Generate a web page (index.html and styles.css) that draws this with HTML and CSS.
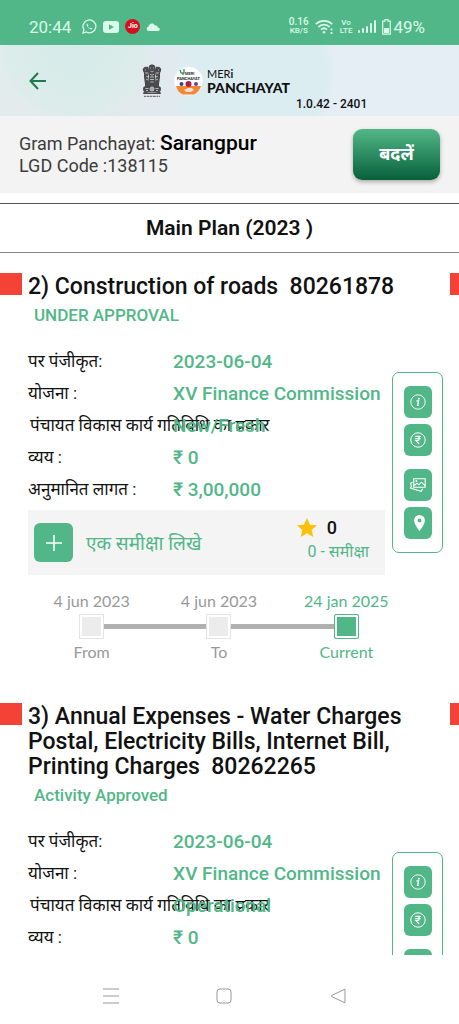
FILE: index.html
```html
<!DOCTYPE html>
<html lang="en">
  <head>
    <meta charset="UTF-8" />
    <meta name="viewport" content="width=device-width, initial-scale=1.0" />
    <title>Meri Panchayat</title>
    <link rel="stylesheet" href="styles.css">
  </head>
  <body>
    <!-- shared icons -->
    <svg class="sprite" aria-hidden="true">
      <symbol id="icon-info" viewBox="0 0 16 16">
        <circle cx="8" cy="8" r="7.2" fill="none" stroke="#fff" stroke-width="0.9" />
        <circle cx="8.8" cy="4.8" r="1" fill="#fff" />
        <path d="M6.6 7h2L7.6 11.3h1.2" fill="none" stroke="#fff" stroke-width="1.3" />
      </symbol>
      <symbol id="icon-rupee" viewBox="0 0 16 16">
        <circle cx="8" cy="8" r="7.2" fill="none" stroke="#fff" />
        <path d="M5.3 4.4h5.4M5.3 6.5h5.4M5.5 4.4h1.7c2.8 0 2.8 4 0 4H5.6l3.6 3.5" fill="none" stroke="#fff" stroke-width="1.1" />
      </symbol>
      <symbol id="icon-gallery" viewBox="0 0 16 16">
        <path d="M3.7 1.7h11.5v8.6H3.7zM4 8.6l3-2.5 2 1.7 2.4-2.6 3.6 3.4M2.6 5.2L.7 6.1l.8 4M1.4 9.2L.5 11l10.6 3.3 1.6-2.6" fill="none" stroke="#fff" stroke-width="1.1" />
        <circle cx="6.3" cy="4.1" r="1" fill="#fff" />
      </symbol>
      <symbol id="icon-pin" viewBox="0 0 16 16">
        <path d="M9.5 0a5.4 5.4 0 0 0-5.4 5.4C4.1 9.4 9.5 16 9.5 16s5.4-6.6 5.4-10.6A5.4 5.4 0 0 0 9.5 0zm0 3.5a1.9 1.9 0 1 1 0 3.8 1.9 1.9 0 0 1 0-3.8z" fill="#fff" />
      </symbol>
    </svg>

    <div class="app">
      <div class="status-bar">
        <span class="clock">20:44</span>
        <svg width="15" height="15" viewBox="0 0 15 15" fill="none" stroke="#d9fbe9" stroke-width="1.3">
          <path d="M1 14l.9-3.4A6.4 6.4 0 1 1 4.4 13z" />
          <path d="M5 4.2c-1 1.2-.3 3 1.3 4.6s3.3 2.1 4.3 1l-1.8-1.2-.9.7C7 8.9 6.1 8 5.9 7.2l.6-.8z" fill="#d9fbe9" stroke="none" />
        </svg>
        <svg width="16" height="12" viewBox="0 0 16 12">
          <rect width="16" height="12" rx="3" fill="#d9fbe9" />
          <path d="M6 3.2v5.6L11 6z" fill="#52b788" />
        </svg>
        <span class="jio">Jio</span>
        <svg width="14" height="9" viewBox="0 0 14 9">
          <path d="M2.5 9a2.3 2.3 0 0 1 0-4.5C3.2 1.5 7 0 9 3.6c2-.4 2.6.8 2.7 1.8C14.5 5.7 14.4 9 12 9z" fill="#d9fbe9" />
        </svg>
        <span class="speed"><b>0.16</b><br>KB/S</span>
        <svg width="19" height="16" viewBox="0 0 19 16" fill="none" stroke="#d9fbe9" stroke-width="1.8">
          <path d="M.8 5.2a12 12 0 0 1 16.4 0M3.4 8a8 8 0 0 1 11.2 0M6 10.6a4.5 4.5 0 0 1 6 0" />
          <circle cx="9" cy="13.2" r="1.3" fill="#d9fbe9" stroke="none" />
          <path d="M16.5 9.5v2M16.5 13v2" />
        </svg>
        <span class="volte">Vo<br>LTE</span>
        <svg width="18" height="14" viewBox="0 0 18 14" fill="#d9fbe9">
          <rect x="0" y="10" width="2" height="3" rx="1" />
          <rect x="4" y="8" width="2" height="5" rx="1" />
          <rect x="8" y="6" width="2" height="7" rx="1" />
          <rect x="12" y="3" width="2" height="10" rx="1" />
          <rect x="16" y="0" width="2" height="13" rx="1" />
        </svg>
        <svg width="9" height="16" viewBox="0 0 9 16">
          <path d="M3 .7h3v1.5h2.3v13H.7v-13H3z" fill="none" stroke="#d9fbe9" stroke-width="1.2" />
          <rect x="2" y="9" width="5" height="5" fill="#d9fbe9" />
        </svg>
        <span class="battery">49%</span>
      </div>

      <header class="header">
        <button class="back" aria-label="Back">
          <svg width="17" height="18" viewBox="0 0 17 18" fill="none" stroke="#1b7a50" stroke-width="2">
            <path d="M17 9H1.5M9 1L1.5 9 9 17" />
          </svg>
        </button>
        <div class="brand">
          <svg class="emblem" width="20" height="34" viewBox="0 0 20 34">
            <g fill="#4a4a4a">
              <path d="M7 2c1-2 5-2 6 0l1 4-1 6 1 8H6l1-8-1-6z" />
              <path d="M6 3C3 2 0 4 1 7l1 2v4l1 7h4l-1-7 1-6zM14 3c3-1 6 1 5 4l-1 2v4l-1 7h-4l1-7-1-6z" />
              <path d="M3 20h14v2H3zM2 27c2 2 14 2 16 0l1 3H1z" />
              <rect x="1" y="22" width="18" height="6" rx="3" />
            </g>
            <g fill="none" stroke="#e5ecef" stroke-width="0.7">
              <path d="M8 4h1M11 4h1M8.5 7c1 1 2 1 3 0M8 10c1 1.5 3 1.5 4 0M8 13h4M8 15.5h4M8.5 18h3M3 6h1M16 6h1M3 9h3M14 9h3M4 12l2 1M16 12l-2 1M4 15l2 1M16 15l-2 1" />
              <circle cx="10" cy="25" r="2" />
              <path d="M10 23v4M8 25h4M3.5 24.5h3M13.5 24.5h3M4 26.5h2M14 26.5h2" />
            </g>
            <path d="M2 32.3h16" stroke="#777" stroke-width="1.3" stroke-dasharray="2 .6 3 .6" />
          </svg>
          <svg class="logo" width="29" height="30" viewBox="0 0 29 30">
            <circle cx="14.5" cy="15" r="14.3" fill="#fff" />
            <path d="M2 20h25c-1 4-4 7-7 8.5H9C5 27 3 24 2 20z" fill="#f58634" />
            <path d="M10 24l4-2h4l2 2-3 2h-5z" fill="#fff" opacity=".75" />
            <path d="M6 4l1 3h3V3M9 7v2" fill="none" stroke="#158052" stroke-width="1.2" />
            <text x="11" y="9" class="logo-meri">MERI</text>
            <text x="14.5" y="14" text-anchor="middle" class="logo-name">PANCHAYAT</text>
            <circle cx="7.5" cy="18" r="2" fill="#34457e" />
            <circle cx="14.5" cy="18" r="3" fill="#ad2446" />
            <circle cx="22" cy="18" r="2" fill="#6c4394" />
          </svg>
          <div class="brand-name">
            <span>MER<b>i</b></span>
            <strong>PANCHAYAT</strong>
          </div>
        </div>
        <span class="version">1.0.42 - 2401</span>
      </header>

      <section class="place">
        <div class="place-text">
          <p>Gram Panchayat: <strong>Sarangpur</strong></p>
          <p>LGD Code :138115</p>
        </div>
        <button class="change">बदलें</button>
      </section>

      <main class="content">
        <h1 class="plan-title">Main Plan (2023 )</h1>

        <article class="activity">
          <div class="activity-head">
            <h2>2) Construction of roads&nbsp; 80261878</h2>
          </div>
          <p class="activity-status">UNDER APPROVAL</p>
          <div class="activity-body">
            <div class="details">
              <dl>
                <dt>पर पंजीकृत:</dt>
                <dd>2023-06-04</dd>
                <dt>योजना :</dt>
                <dd>XV Finance Commission</dd>
                <dt class="kind">पंचायत विकास कार्य गतिविधि का प्रकार</dt>
                <dd>New/Fresh</dd>
                <dt>व्यय :</dt>
                <dd>₹ 0</dd>
                <dt>अनुमानित लागत :</dt>
                <dd>₹ 3,00,000</dd>
              </dl>
              <div class="review">
                <button class="write-review">
                  <span class="plus">
                    <svg width="16" height="16" viewBox="0 0 16 16" stroke="#fff" stroke-width="1.5">
                      <path d="M8 0v16M0 8h16" />
                    </svg>
                  </span>
                  एक समीक्षा लिखे
                </button>
                <div class="rating">
                  <p class="score">
                    <svg width="20" height="19" viewBox="0 0 20 19">
                      <path d="M10 0l3 6.7 7 .6-5.3 4.7 1.6 7L10 15.3 3.7 19l1.6-7L0 7.3l7-.6z" fill="#ffc107" />
                    </svg>
                    0
                  </p>
                  <p class="count">0 - समीक्षा</p>
                </div>
              </div>
            </div>
            <div class="actions">
              <button aria-label="Info"><svg><use href="#icon-info" /></svg></button>
              <button aria-label="Expenses"><svg><use href="#icon-rupee" /></svg></button>
              <button class="gap" aria-label="Photos"><svg><use href="#icon-gallery" /></svg></button>
              <button aria-label="Location"><svg><use href="#icon-pin" /></svg></button>
            </div>
          </div>
          <ol class="timeline">
            <li><span>4 jun 2023</span><i></i><span>From</span></li>
            <li><span>4 jun 2023</span><i></i><span>To</span></li>
            <li class="current"><span>24 jan 2025</span><i></i><span>Current</span></li>
          </ol>
        </article>

        <article class="activity">
          <div class="activity-head">
            <h2>3) Annual Expenses - Water Charges Postal, Electricity Bills, Internet Bill, Printing Charges&nbsp; 80262265</h2>
          </div>
          <p class="activity-status">Activity Approved</p>
          <div class="activity-body">
            <div class="details">
              <dl>
                <dt>पर पंजीकृत:</dt>
                <dd>2023-06-04</dd>
                <dt>योजना :</dt>
                <dd>XV Finance Commission</dd>
                <dt class="kind">पंचायत विकास कार्य गतिविधि का प्रकार</dt>
                <dd>Operational</dd>
                <dt>व्यय :</dt>
                <dd>₹ 0</dd>
              </dl>
            </div>
            <div class="actions">
              <button aria-label="Info"><svg><use href="#icon-info" /></svg></button>
              <button aria-label="Expenses"><svg><use href="#icon-rupee" /></svg></button>
              <button class="gap" aria-label="Photos"><svg><use href="#icon-gallery" /></svg></button>
              <button aria-label="Location"><svg><use href="#icon-pin" /></svg></button>
            </div>
          </div>
        </article>
      </main>

      <nav class="system-nav">
        <button aria-label="Recent apps">
          <svg width="16" height="16" viewBox="0 0 16 16"><path d="M0 1h16M0 8h16M0 15h16" /></svg>
        </button>
        <button aria-label="Home">
          <svg width="16" height="16" viewBox="0 0 16 16"><rect x="1" y="1" width="14" height="14" rx="3" /></svg>
        </button>
        <button aria-label="Back">
          <svg width="16" height="16" viewBox="0 0 16 16"><path d="M15 1.2v13.6L1.5 8.500q-.6-.5 0-1z" /></svg>
        </button>
      </nav>
    </div>
  </body>
</html>
```

FILE: styles.css
```css
* {
  box-sizing: border-box;
}

body {
  margin: 0;
  background: #fff;
  color: #111;
  font-family: Roboto, "Noto Sans", sans-serif;
}

h1, h2, p, dl, dd, ol {
  margin: 0;
  padding: 0;
}

button {
  padding: 0;
  border: none;
  background: none;
  font-family: inherit;
  cursor: pointer;
}

svg {
  flex-shrink: 0;
}

.sprite {
  display: none;
}

.app {
  display: flex;
  flex-direction: column;
  height: 100vh;
}

/* phone status bar */
.status-bar {
  display: flex;
  align-items: center;
  flex-shrink: 0;
  height: 45px;
  padding: 8px 34px 0 29px;
  background: #52b788;
  color: #d9fbe9;
  gap: 6px;
}

.clock {
  margin-right: 5px;
  font-size: 17px;
}

.jio {
  width: 15px;
  border-radius: 50%;
  background: #d4101e;
  color: #fff;
  font-size: 7px;
  font-weight: bold;
  line-height: 15px;
  text-align: center;
}

.speed,
.volte {
  font-size: 8px;
  font-weight: 500;
  line-height: 8px;
  text-align: center;
}

.speed {
  margin-left: auto;
}

.speed b {
  font-size: 10px;
  font-weight: 500;
}

.battery {
  margin-left: -4px;
  font-size: 17px;
}

/* header */
.header {
  display: flex;
  align-items: center;
  flex-shrink: 0;
  height: 71px;
  padding: 0 29px;
  background:
    radial-gradient(circle at 75px 0, #d5ebea 0, #dcecea 68px, transparent 76px),
    radial-gradient(circle at 255px 30px, #dcedf2 0, #dcedf2 72px, transparent 82px),
    linear-gradient(90deg, #e3ecec, #e2e9ec 25%, #deebf2 50%, #e6eef5 75%);
}

.back {
  display: flex;
  margin-right: 96px;
}

.brand {
  display: flex;
  align-items: center;
}

.logo {
  margin: 0 4px 0 12px;
}

.logo-meri {
  font-size: 4px;
  font-weight: bold;
  fill: #333;
}

.logo-name {
  font-size: 4px;
  font-weight: bold;
  fill: #222;
}

.brand-name {
  display: flex;
  flex-direction: column;
  font-family: Lato, sans-serif;
  font-size: 11px;
  line-height: 14px;
}

.brand-name strong {
  font-size: 14px;
  font-weight: 900;
}

.version {
  align-self: flex-end;
  margin: 0 0 5px 6px;
  font-size: 12px;
  font-weight: 500;
  white-space: nowrap;
}

/* selected panchayat */
.place {
  display: flex;
  align-items: center;
  justify-content: space-between;
  flex-shrink: 0;
  height: 77px;
  padding: 0 19px;
  background: #f3f3f3;
}

.place-text {
  color: #3c3c3c;
  font-size: 18px;
  line-height: 22px;
}

.place-text strong {
  color: #000;
  font-size: 21px;
  font-weight: 500;
}

.change {
  width: 87px;
  height: 51px;
  padding-bottom: 3px;
  border-radius: 9px;
  background: linear-gradient(#52b788, #08603a);
  box-shadow: 0 2px 4px rgba(0, 0, 0, 0.3);
  color: #fff;
  font-size: 18px;
  font-weight: bold;
}

/* activity list */
.content {
  flex: 1;
  min-height: 0;
  padding-top: 10px;
  overflow: hidden;
}

.plan-title {
  margin-bottom: 20px;
  border-top: 1px solid #555;
  border-bottom: 1px solid #888;
  font-size: 21px;
  font-weight: 600;
  line-height: 48px;
  text-align: center;
}

.activity {
  margin-bottom: 41px;
}

.activity-head {
  display: flex;
  justify-content: space-between;
}

.activity-head::before,
.activity-head::after {
  content: "";
  flex-shrink: 0;
  width: 22px;
  height: 22px;
  background: #f44336;
}

.activity-head::after {
  width: 9px;
}

.activity-head h2 {
  flex: 1;
  padding: 1px 28px 0 6px;
  font-size: 23px;
  font-weight: 500;
  line-height: 25px;
}

.activity-status {
  margin: 6px 0 21px 34px;
  color: #52b788;
  font-size: 17px;
  font-weight: 500;
  line-height: 20px;
}

.activity-body {
  display: flex;
  align-items: flex-start;
  gap: 7px;
  padding: 0 16px 0 28px;
}

.details {
  flex: 1;
  min-width: 0;
}

.details dl {
  display: grid;
  grid-template-columns: 145px 1fr;
  grid-auto-rows: 32px;
  line-height: 32px;
  white-space: nowrap;
}

.details dt {
  width: 0;
  font-size: 17px;
  line-height: 30px;
}

.details .kind {
  padding-left: 2px;
}

.details dd {
  color: #52b788;
  font-size: 19px;
  font-weight: 500;
}

.review {
  display: flex;
  align-items: center;
  justify-content: space-between;
  height: 65px;
  margin-top: 4px;
  padding: 0 16px 0 6px;
  background: #f4f4f4;
}

.write-review {
  display: flex;
  align-items: center;
  gap: 13px;
  color: #52b788;
  font-size: 19px;
}

.plus {
  display: flex;
  align-items: center;
  justify-content: center;
  width: 39px;
  height: 39px;
  border-radius: 6px;
  background: #52b788;
}

.rating {
  line-height: 24px;
}

.score {
  display: flex;
  align-items: center;
  gap: 10px;
  margin-right: 32px;
  font-size: 18px;
  font-weight: 500;
}

.count {
  padding-bottom: 6px;
  color: #52b788;
  font-size: 16px;
  text-align: right;
}

.actions {
  display: flex;
  flex-direction: column;
  align-items: center;
  gap: 6px;
  width: 51px;
  margin-top: 26px;
  padding: 13px 0;
  border: 1px solid #52b788;
  border-radius: 7px;
}

.actions button {
  display: flex;
  align-items: center;
  justify-content: center;
  width: 28px;
  height: 32px;
  border-radius: 6px;
  background: #52b788;
}

.actions .gap {
  margin-top: 7px;
}

.actions svg {
  width: 16px;
  height: 16px;
}

.timeline {
  display: grid;
  grid-template-columns: repeat(3, 1fr);
  margin: 16px 49px 0 28px;
  color: #999;
  font-family: Lato, sans-serif;
  font-size: 16px;
  line-height: 20px;
  list-style: none;
  text-align: center;
}

.timeline li {
  display: grid;
  grid-template-columns: 1fr 25px 1fr;
  align-items: center;
  row-gap: 3px;
}

.timeline span {
  grid-column: 1 / -1;
}

.timeline i {
  grid-column: 2;
  height: 25px;
  border: 1px solid #e4e4e4;
  background: #ececec;
  box-shadow: inset 0 0 0 2px #fff;
}

/* connecting line, one half on each side of a step */
.timeline li::before,
.timeline li::after {
  content: "";
  grid-row: 2;
  height: 5px;
  background: #b0b0b0;
}

.timeline li::before {
  grid-column: 1;
}

.timeline li::after {
  grid-column: 3;
}

.timeline li:first-child::before,
.timeline li:last-child::after {
  background: none;
}

.timeline .current {
  color: #52b788;
}

.timeline .current i {
  border-color: #52b788;
  border-radius: 2px;
  background: #52b788;
}

/* android navigation */
.system-nav {
  display: grid;
  grid-template-columns: repeat(3, 1fr);
  flex-shrink: 0;
  height: 69px;
  padding: 13px 64px 0 54px;
}

.system-nav button {
  display: flex;
  align-items: center;
  justify-content: center;
}

.system-nav svg {
  fill: none;
  stroke: #999;
}
```
